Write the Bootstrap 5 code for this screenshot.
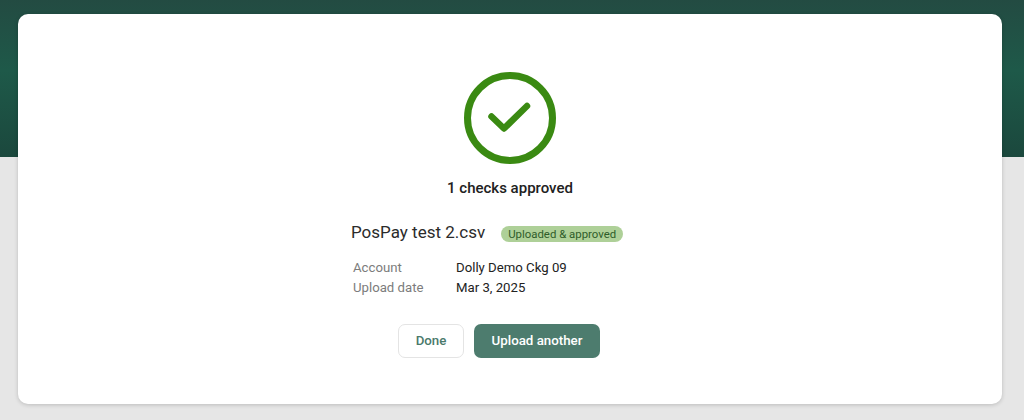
<!DOCTYPE html>
<html lang="en">
<head>
  <meta charset="UTF-8" />
  <title>Upload complete</title>
  <meta name="viewport" content="width=device-width, initial-scale=1" />
  <link href="https://cdn.jsdelivr.net/npm/bootstrap@5.3.0/dist/css/bootstrap.min.css" rel="stylesheet" />
  <style>
    body {
      font-family: Roboto, "Liberation Sans", sans-serif;
      height: 420px;
      overflow: hidden;
      padding: 14px 22px 0 18px;
      background: linear-gradient(180deg, #234b42 0%, #1e5949 45%, #1b483d 100%) no-repeat top / 100% 157px, #e6e6e6;
    }
    .result-card {
      height: 390px;
      padding-top: 58px;
      background: #fff;
      border-radius: 10px;
      box-shadow: 0 1px 4px rgba(0, 0, 0, .18);
    }
    .check-icon { display: block; width: 92px; height: 92px; }
    .result-title { margin: 14px 0 0; font-size: 15px; line-height: 20px; font-weight: 500; color: #212121; }
    .file-block { width: 318px; margin-top: 22px; }
    .file-name { font-size: 17px; line-height: 24px; color: #2b2b2b; margin-bottom: 3px; }
    .file-status {
      margin-left: 16px;
      padding: 0 7px;
      font-size: 11.4px;
      line-height: 16px;
      color: #2f5d2a;
      background: #aed098;
      border-radius: 8px;
    }
    .file-meta { margin: 11px 0 0 2px; font-size: 13.2px; line-height: 20px; }
    .file-meta dt { width: 103px; font-weight: 400; color: #7c7c7c; }
    .file-meta dd { margin: 0; color: #222; }
    .result-actions { margin-top: 26px; padding-right: 22px; gap: 10px; }
    .btn-done, .btn-another {
      height: 34px;
      padding: 0;
      font-size: 13.3px;
      font-weight: 500;
      border-radius: 7px;
    }
    .btn-done { width: 66px; color: #4a7a6b; background: #fff; border: 1px solid #e4e4e4; }
    .btn-another { width: 126px; color: #fff; background: #4d7c6e; border: 0; }
  </style>
</head>
<body>
  <div class="result-card d-flex flex-column align-items-center">
    <svg class="check-icon" viewBox="0 0 92 92" aria-hidden="true">
      <circle cx="46" cy="46" r="42.5" fill="none" stroke="#3a8a12" stroke-width="7" />
      <path d="M27.5 44.5 L40 56.5 L63 34" fill="none" stroke="#3a8a12" stroke-width="6.5" stroke-linecap="round" stroke-linejoin="round" />
    </svg>
    <p class="result-title">1 checks approved</p>

    <div class="file-block">
      <div class="d-flex align-items-center">
        <span class="file-name">PosPay test 2.csv</span>
        <span class="file-status">Uploaded &amp; approved</span>
      </div>
      <dl class="file-meta">
        <div class="d-flex"><dt>Account</dt><dd>Dolly Demo Ckg 09</dd></div>
        <div class="d-flex"><dt>Upload date</dt><dd>Mar 3, 2025</dd></div>
      </dl>
    </div>

    <div class="result-actions d-flex">
      <button type="button" class="btn btn-done">Done</button>
      <button type="button" class="btn btn-another">Upload another</button>
    </div>
  </div>

  <script src="https://cdn.jsdelivr.net/npm/bootstrap@5.3.0/dist/js/bootstrap.bundle.min.js"></script>
</body>
</html>
